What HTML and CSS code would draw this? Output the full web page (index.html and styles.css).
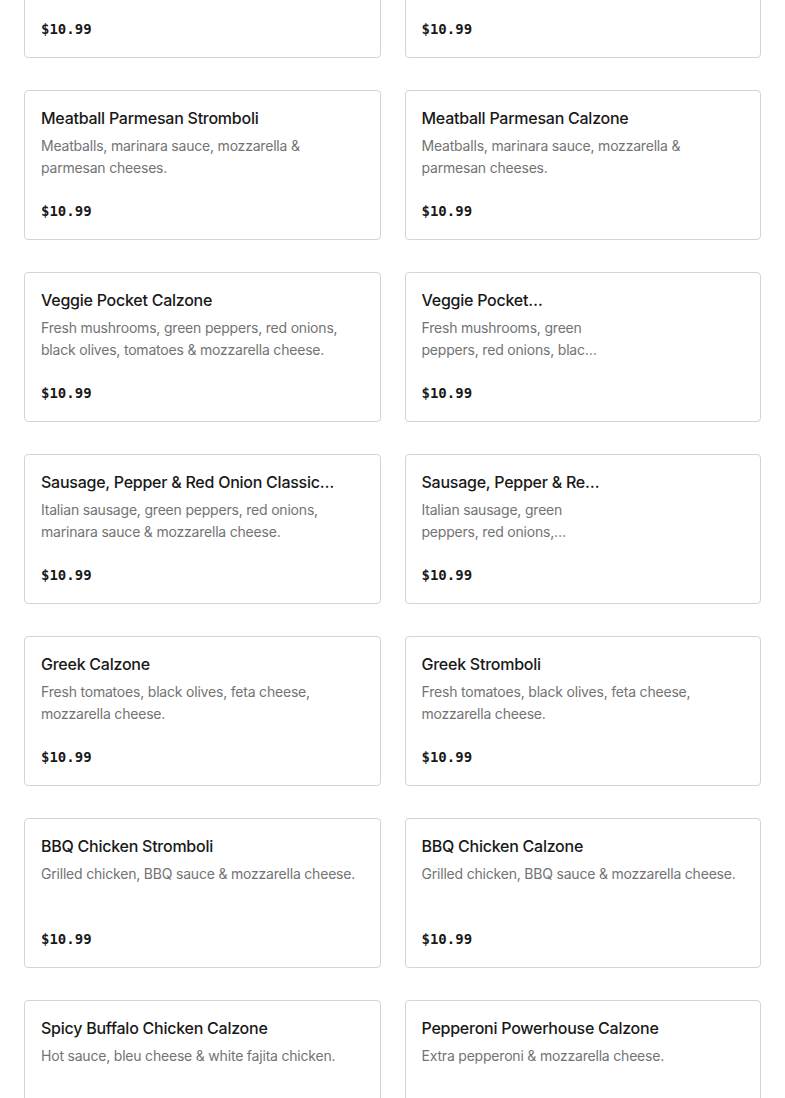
FILE: index.html
```html
<!DOCTYPE html>
<html lang="en">
<head>
<meta charset="utf-8">
<title>Menu</title>
<link rel="stylesheet" href="styles.css">
</head>
<body>
<main class="menu">
  <div class="grid">
    <article class="card"><div class="info"><h3 class="title">Meatball Parmesan Pocket</h3><p class="desc">Meatballs, marinara sauce, mozzarella &amp; parmesan cheeses.</p><span class="price">$10.99</span></div></article>
    <article class="card"><div class="info"><h3 class="title">Meatball Parmesan Pocket Calzone</h3><p class="desc">Meatballs, marinara sauce, mozzarella &amp; parmesan cheeses.</p><span class="price">$10.99</span></div></article>

    <article class="card"><div class="info"><h3 class="title">Meatball Parmesan Stromboli</h3><p class="desc">Meatballs, marinara sauce, mozzarella &amp; parmesan cheeses.</p><span class="price">$10.99</span></div></article>
    <article class="card"><div class="info"><h3 class="title">Meatball Parmesan Calzone</h3><p class="desc">Meatballs, marinara sauce, mozzarella &amp; parmesan cheeses.</p><span class="price">$10.99</span></div></article>

    <article class="card"><div class="info"><h3 class="title">Veggie Pocket Calzone</h3><p class="desc">Fresh mushrooms, green peppers, red onions, black olives, tomatoes &amp; mozzarella cheese.</p><span class="price">$10.99</span></div></article>
    <article class="card has-media"><div class="info"><h3 class="title">Veggie Pocket Stromboli</h3><p class="desc">Fresh mushrooms, green peppers, red onions, black olives, tomatoes &amp; mozzarella cheese.</p><span class="price">$10.99</span></div><div class="media"></div></article>

    <article class="card"><div class="info"><h3 class="title">Sausage, Pepper &amp; Red Onion Classic Calzone</h3><p class="desc">Italian sausage, green peppers, red onions, marinara sauce &amp; mozzarella cheese.</p><span class="price">$10.99</span></div></article>
    <article class="card has-media"><div class="info"><h3 class="title">Sausage, Pepper &amp; Red Onion Stromboli</h3><p class="desc">Italian sausage, green peppers, red onions, marinara sauce &amp; mozzarella cheese.</p><span class="price">$10.99</span></div><div class="media"></div></article>

    <article class="card"><div class="info"><h3 class="title">Greek Calzone</h3><p class="desc">Fresh tomatoes, black olives, feta cheese, mozzarella cheese.</p><span class="price">$10.99</span></div></article>
    <article class="card"><div class="info"><h3 class="title">Greek Stromboli</h3><p class="desc">Fresh tomatoes, black olives, feta cheese, mozzarella cheese.</p><span class="price">$10.99</span></div></article>

    <article class="card"><div class="info"><h3 class="title">BBQ Chicken Stromboli</h3><p class="desc">Grilled chicken, BBQ sauce &amp; mozzarella cheese.</p><span class="price">$10.99</span></div></article>
    <article class="card"><div class="info"><h3 class="title">BBQ Chicken Calzone</h3><p class="desc">Grilled chicken, BBQ sauce &amp; mozzarella cheese.</p><span class="price">$10.99</span></div></article>

    <article class="card"><div class="info"><h3 class="title">Spicy Buffalo Chicken Calzone</h3><p class="desc">Hot sauce, bleu cheese &amp; white fajita chicken.</p><span class="price">$10.99</span></div></article>
    <article class="card"><div class="info"><h3 class="title">Pepperoni Powerhouse Calzone</h3><p class="desc">Extra pepperoni &amp; mozzarella cheese.</p><span class="price">$10.99</span></div></article>
  </div>
</main>
</body>
</html>
```

FILE: styles.css
```css
html, body {
  margin: 0;
  padding: 0;
  background: #ffffff;
}

body {
  font-family: Inter, "Noto Sans", "Liberation Sans", sans-serif;
  color: #191919;
  overflow: hidden;
}

.menu {
  padding: 0 24px;
}

.grid {
  display: grid;
  grid-template-columns: 1fr 1fr;
  column-gap: 24px;
  row-gap: 32px;
  margin-top: -92px;
}

.card {
  box-sizing: border-box;
  height: 150px;
  border: 1px solid #d4d4d4;
  border-radius: 4px;
  padding: 16px 16px 0 16px;
  display: flex;
  gap: 16px;
  background: #fff;
}

.info {
  flex: 1;
  min-width: 0;
  display: flex;
  flex-direction: column;
}

.media {
  flex: 0 0 125px;
  height: 116px;
}

.title {
  margin: 0;
  font-size: 16px;
  font-weight: 500;
  line-height: 22px;
  color: #191919;
  letter-spacing: -0.25px;
  display: -webkit-box;
  -webkit-box-orient: vertical;
  -webkit-line-clamp: 1;
  overflow: hidden;
}

.desc {
  margin: 6px 0 0 0;
  font-size: 14px;
  line-height: 22px;
  letter-spacing: -0.2px;
  color: #737373;
  height: 44px;
  display: -webkit-box;
  -webkit-box-orient: vertical;
  -webkit-line-clamp: 2;
  overflow: hidden;
}

.price {
  margin-top: 22px;
  font-family: "DejaVu Sans Mono", "Liberation Mono", monospace;
  font-weight: 700;
  font-size: 14px;
  line-height: 20px;
  color: #191919;
}
```
